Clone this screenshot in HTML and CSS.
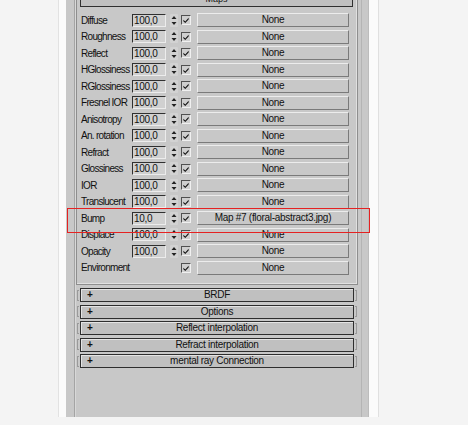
FILE: index.html
```html
<!DOCTYPE html>
<html>

<head>
    <title>Maps</title>
    <link rel="stylesheet" href="styles.css">
</head>

<body>
    <div class="frame">
        <div class="panel">
            <div class="rollouts">
                <div class="group">
                    <div class="group-head">Maps</div>

                    <div class="maps">
                        <div class="row"><span class="label">Diffuse</span><span class="num">100,0</span><span class="spin"><svg width="8" height="13" viewBox="0 0 8 13"><path d="M4 2 L6.5 5 L1.5 5 Z M4 11 L6.5 8 L1.5 8 Z" fill="#222"/></svg></span><span class="check"><svg width="6" height="6" viewBox="0 0 8 8"><path d="M0.5 3.5 L3 6 L7.5 1 L7.5 3.3 L3 8 L0.5 5.5 Z" fill="#111"/></svg></span><span class="btn">None</span></div>
                        <div class="row"><span class="label">Roughness</span><span class="num">100,0</span><span class="spin"><svg width="8" height="13" viewBox="0 0 8 13"><path d="M4 2 L6.5 5 L1.5 5 Z M4 11 L6.5 8 L1.5 8 Z" fill="#222"/></svg></span><span class="check"><svg width="6" height="6" viewBox="0 0 8 8"><path d="M0.5 3.5 L3 6 L7.5 1 L7.5 3.3 L3 8 L0.5 5.5 Z" fill="#111"/></svg></span><span class="btn">None</span></div>
                        <div class="row"><span class="label">Reflect</span><span class="num">100,0</span><span class="spin"><svg width="8" height="13" viewBox="0 0 8 13"><path d="M4 2 L6.5 5 L1.5 5 Z M4 11 L6.5 8 L1.5 8 Z" fill="#222"/></svg></span><span class="check"><svg width="6" height="6" viewBox="0 0 8 8"><path d="M0.5 3.5 L3 6 L7.5 1 L7.5 3.3 L3 8 L0.5 5.5 Z" fill="#111"/></svg></span><span class="btn">None</span></div>
                        <div class="row"><span class="label">HGlossiness</span><span class="num">100,0</span><span class="spin"><svg width="8" height="13" viewBox="0 0 8 13"><path d="M4 2 L6.5 5 L1.5 5 Z M4 11 L6.5 8 L1.5 8 Z" fill="#222"/></svg></span><span class="check"><svg width="6" height="6" viewBox="0 0 8 8"><path d="M0.5 3.5 L3 6 L7.5 1 L7.5 3.3 L3 8 L0.5 5.5 Z" fill="#111"/></svg></span><span class="btn">None</span></div>
                        <div class="row"><span class="label">RGlossiness</span><span class="num">100,0</span><span class="spin"><svg width="8" height="13" viewBox="0 0 8 13"><path d="M4 2 L6.5 5 L1.5 5 Z M4 11 L6.5 8 L1.5 8 Z" fill="#222"/></svg></span><span class="check"><svg width="6" height="6" viewBox="0 0 8 8"><path d="M0.5 3.5 L3 6 L7.5 1 L7.5 3.3 L3 8 L0.5 5.5 Z" fill="#111"/></svg></span><span class="btn">None</span></div>
                        <div class="row"><span class="label">Fresnel IOR</span><span class="num">100,0</span><span class="spin"><svg width="8" height="13" viewBox="0 0 8 13"><path d="M4 2 L6.5 5 L1.5 5 Z M4 11 L6.5 8 L1.5 8 Z" fill="#222"/></svg></span><span class="check"><svg width="6" height="6" viewBox="0 0 8 8"><path d="M0.5 3.5 L3 6 L7.5 1 L7.5 3.3 L3 8 L0.5 5.5 Z" fill="#111"/></svg></span><span class="btn">None</span></div>
                        <div class="row"><span class="label">Anisotropy</span><span class="num">100,0</span><span class="spin"><svg width="8" height="13" viewBox="0 0 8 13"><path d="M4 2 L6.5 5 L1.5 5 Z M4 11 L6.5 8 L1.5 8 Z" fill="#222"/></svg></span><span class="check"><svg width="6" height="6" viewBox="0 0 8 8"><path d="M0.5 3.5 L3 6 L7.5 1 L7.5 3.3 L3 8 L0.5 5.5 Z" fill="#111"/></svg></span><span class="btn">None</span></div>
                        <div class="row"><span class="label">An. rotation</span><span class="num">100,0</span><span class="spin"><svg width="8" height="13" viewBox="0 0 8 13"><path d="M4 2 L6.5 5 L1.5 5 Z M4 11 L6.5 8 L1.5 8 Z" fill="#222"/></svg></span><span class="check"><svg width="6" height="6" viewBox="0 0 8 8"><path d="M0.5 3.5 L3 6 L7.5 1 L7.5 3.3 L3 8 L0.5 5.5 Z" fill="#111"/></svg></span><span class="btn">None</span></div>
                        <div class="row"><span class="label">Refract</span><span class="num">100,0</span><span class="spin"><svg width="8" height="13" viewBox="0 0 8 13"><path d="M4 2 L6.5 5 L1.5 5 Z M4 11 L6.5 8 L1.5 8 Z" fill="#222"/></svg></span><span class="check"><svg width="6" height="6" viewBox="0 0 8 8"><path d="M0.5 3.5 L3 6 L7.5 1 L7.5 3.3 L3 8 L0.5 5.5 Z" fill="#111"/></svg></span><span class="btn">None</span></div>
                        <div class="row"><span class="label">Glossiness</span><span class="num">100,0</span><span class="spin"><svg width="8" height="13" viewBox="0 0 8 13"><path d="M4 2 L6.5 5 L1.5 5 Z M4 11 L6.5 8 L1.5 8 Z" fill="#222"/></svg></span><span class="check"><svg width="6" height="6" viewBox="0 0 8 8"><path d="M0.5 3.5 L3 6 L7.5 1 L7.5 3.3 L3 8 L0.5 5.5 Z" fill="#111"/></svg></span><span class="btn">None</span></div>
                        <div class="row"><span class="label">IOR</span><span class="num">100,0</span><span class="spin"><svg width="8" height="13" viewBox="0 0 8 13"><path d="M4 2 L6.5 5 L1.5 5 Z M4 11 L6.5 8 L1.5 8 Z" fill="#222"/></svg></span><span class="check"><svg width="6" height="6" viewBox="0 0 8 8"><path d="M0.5 3.5 L3 6 L7.5 1 L7.5 3.3 L3 8 L0.5 5.5 Z" fill="#111"/></svg></span><span class="btn">None</span></div>
                        <div class="row"><span class="label">Translucent</span><span class="num">100,0</span><span class="spin"><svg width="8" height="13" viewBox="0 0 8 13"><path d="M4 2 L6.5 5 L1.5 5 Z M4 11 L6.5 8 L1.5 8 Z" fill="#222"/></svg></span><span class="check"><svg width="6" height="6" viewBox="0 0 8 8"><path d="M0.5 3.5 L3 6 L7.5 1 L7.5 3.3 L3 8 L0.5 5.5 Z" fill="#111"/></svg></span><span class="btn">None</span></div>
                        <div class="row"><span class="label">Bump</span><span class="num">10,0</span><span class="spin"><svg width="8" height="13" viewBox="0 0 8 13"><path d="M4 2 L6.5 5 L1.5 5 Z M4 11 L6.5 8 L1.5 8 Z" fill="#222"/></svg></span><span class="check"><svg width="6" height="6" viewBox="0 0 8 8"><path d="M0.5 3.5 L3 6 L7.5 1 L7.5 3.3 L3 8 L0.5 5.5 Z" fill="#111"/></svg></span><span class="btn">Map #7 (floral-abstract3.jpg)</span></div>
                        <div class="row"><span class="label">Displace</span><span class="num">100,0</span><span class="spin"><svg width="8" height="13" viewBox="0 0 8 13"><path d="M4 2 L6.5 5 L1.5 5 Z M4 11 L6.5 8 L1.5 8 Z" fill="#222"/></svg></span><span class="check"><svg width="6" height="6" viewBox="0 0 8 8"><path d="M0.5 3.5 L3 6 L7.5 1 L7.5 3.3 L3 8 L0.5 5.5 Z" fill="#111"/></svg></span><span class="btn">None</span></div>
                        <div class="row"><span class="label">Opacity</span><span class="num">100,0</span><span class="spin"><svg width="8" height="13" viewBox="0 0 8 13"><path d="M4 2 L6.5 5 L1.5 5 Z M4 11 L6.5 8 L1.5 8 Z" fill="#222"/></svg></span><span class="check"><svg width="6" height="6" viewBox="0 0 8 8"><path d="M0.5 3.5 L3 6 L7.5 1 L7.5 3.3 L3 8 L0.5 5.5 Z" fill="#111"/></svg></span><span class="btn">None</span></div>
                        <div class="row"><span class="label">Environment</span><span class="num empty"></span><span class="spin empty"></span><span class="check"><svg width="6" height="6" viewBox="0 0 8 8"><path d="M0.5 3.5 L3 6 L7.5 1 L7.5 3.3 L3 8 L0.5 5.5 Z" fill="#111"/></svg></span><span class="btn">None</span></div>

                        <!-- highlight around the bump slot -->
                        <div class="mark"></div>
                    </div>
                </div>

                <div class="roll"><span class="brk"></span><span class="roll-btn"><span class="plus">+</span><span class="roll-title">BRDF</span></span><span class="brk"></span></div>
                <div class="roll"><span class="brk"></span><span class="roll-btn"><span class="plus">+</span><span class="roll-title">Options</span></span><span class="brk"></span></div>
                <div class="roll"><span class="brk"></span><span class="roll-btn"><span class="plus">+</span><span class="roll-title">Reflect interpolation</span></span><span class="brk"></span></div>
                <div class="roll"><span class="brk"></span><span class="roll-btn"><span class="plus">+</span><span class="roll-title">Refract interpolation</span></span><span class="brk"></span></div>
                <div class="roll"><span class="brk"></span><span class="roll-btn"><span class="plus">+</span><span class="roll-title">mental ray Connection</span></span><span class="brk"></span></div>
            </div>
        </div>
    </div>
</body>

</html>
```

FILE: styles.css
```css
html,
body {
    margin: 0;
    height: 100%;
    overflow: hidden;
    background: #f4f4f4;
    font-family: "Liberation Sans", Arial, sans-serif;
    font-size: 10px;
    color: #111;
}

.frame {
    margin-left: 58px;
    width: 303px;
    height: 100%;
    padding: 0 9px 0 7px;
    background: #fbfbfb;
    border-left: 1px solid #e2e2e2;
    border-right: 1px solid #e0e0e0;
}

.panel {
    height: 100%;
    background: #c8c8c8;
    padding: 0 6px 0 8px;
    border-right: 1px solid #bcbcbc;
    box-sizing: border-box;
}

.rollouts {
    height: 100%;
    border-left: 1px solid #a4a4a4;
    border-right: 1px solid #b4b4b4;
    box-shadow: inset 1px 0 0 #d8d8d8;
}

.group {
    margin: 0 3px 0 1px;
    padding: 0 0 8px;
    border: 1px solid #8e8e8e;
    border-top: none;
    box-shadow: inset -1px -1px 0 #e0e0e0;
}

.group-head {
    height: 13px;
    margin: -8px 4px 0 3px;
    border: 1px solid #303030;
    background: #c0c0c0;
    text-align: center;
    line-height: 13px;
    font-size: 9px;
    overflow: hidden;
}

.maps {
    position: relative;
    margin-top: 5px;
    padding-left: 4px;
}

.row {
    display: flex;
    align-items: center;
    height: 16.5px;
}

.label {
    width: 51px;
    letter-spacing: -0.7px;
    white-space: nowrap;
}

.num {
    width: 31px;
    height: 11px;
    line-height: 11px;
    padding-left: 1px;
    background: #d0d0d0;
    border: 1px solid;
    border-color: #303030 #ececec #ececec #303030;
    letter-spacing: -0.3px;
}

.spin {
    width: 8px;
    height: 13px;
    margin-left: 4px;
    background: #d2d2d2;
    border-radius: 1px;
}

.spin svg {
    display: block;
}

.empty {
    background: none;
    border-color: transparent;
}

.check {
    width: 6px;
    height: 6px;
    margin-left: 3px;
    padding: 1px;
    border: 1px solid;
    border-color: #505050 #f0f0f0 #f0f0f0 #505050;
    background: #cfcfcf;
}

.check svg {
    display: block;
}

.btn {
    width: 150px;
    height: 12px;
    margin-left: 6px;
    line-height: 12px;
    text-align: center;
    background: #c8c8c8;
    border: 1px solid;
    border-color: #ececec #7a7a7a #7a7a7a #ececec;
    letter-spacing: -0.3px;
    white-space: nowrap;
}

.mark {
    position: absolute;
    left: -10px;
    top: 196px;
    width: 301px;
    height: 23px;
    border: 1px solid #e52222;
}

.roll {
    display: flex;
    align-items: center;
    height: 14px;
    margin: 3px 0 2.5px 2px;
}

.roll+.roll {
    margin-top: 0;
}

.brk {
    width: 1px;
    height: 9px;
    border: 1px solid #9a9a9a;
    border-right: none;
}

.roll .brk:last-child {
    border-left: none;
    border-right: 1px solid #9a9a9a;
}

.roll-btn {
    display: flex;
    align-items: center;
    width: 272px;
    height: 12px;
    margin: 0 1px;
    background: #c0c0c0;
    border: 1px solid #2e2e2e;
    box-shadow: inset 1px 1px 0 #e4e4e4;
}

.plus {
    width: 14px;
    padding-left: 6px;
    font-weight: bold;
    line-height: 12px;
}

.roll-title {
    flex: 1;
    margin-right: 20px;
    text-align: center;
    line-height: 12px;
    letter-spacing: -0.3px;
}
```
